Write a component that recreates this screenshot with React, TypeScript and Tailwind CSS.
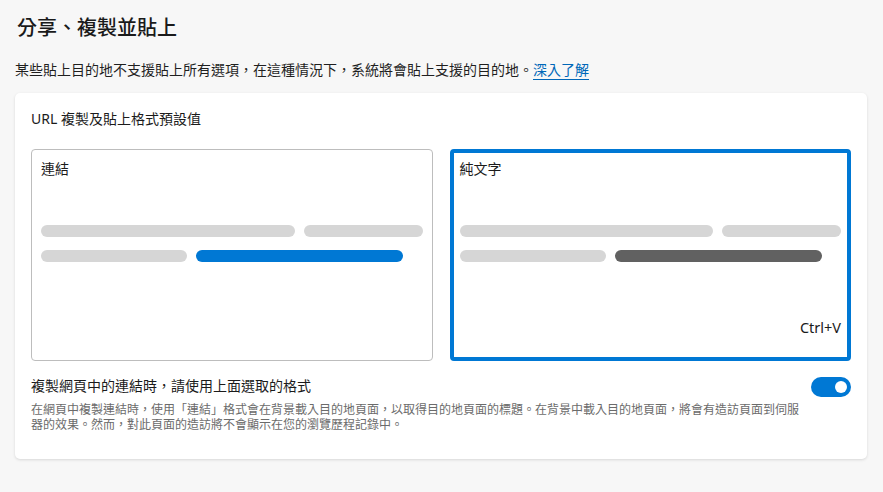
import React from "react";

const font = {
  fontFamily:
    '"Noto Sans", "Noto Sans CJK TC", "Liberation Sans", sans-serif',
};

export default function App() {
  return (
    <div
      className="min-h-[492px] w-full bg-[#f7f7f7] pl-[15px] pr-[16px] pt-[14px] text-[#1b1b1b]"
      style={font}
    >
      <h1 className="pl-[2px] text-[20px] font-medium leading-[28px] text-[#1a1a1a]">
        分享、複製並貼上
      </h1>
      <p className="mt-[18px] text-[14px] leading-[20px] text-[#1f1f1f]">
        某些貼上目的地不支援貼上所有選項，在這種情況下，系統將會貼上支援的目的地。
        <a className="text-[#0067b8] underline decoration-[#0067b8] underline-offset-[4px]">
          深入了解
        </a>
      </p>

      <div className="mt-[13px] rounded-[5px] bg-white px-4 pb-[27px] pt-4 shadow-[0_1px_3px_rgba(0,0,0,0.13)]">
        <div className="text-[14px] leading-[20px] text-[#1b1b1b]">
          URL 複製及貼上格式預設值
        </div>

        <div className="mt-5 grid grid-cols-2 gap-[17px]">
          <div className="flex h-[212px] flex-col rounded-[4px] border border-[#bdbdbd] p-[9px]">
            <div className="text-[14px] leading-[20px] text-[#1b1b1b]">連結</div>
            <div className="mt-[46px] flex gap-[9px]">
              <div className="h-[12px] w-[254px] rounded-full bg-[#d6d6d6]" />
              <div className="h-[12px] w-[119px] rounded-full bg-[#d6d6d6]" />
            </div>
            <div className="mt-[13px] flex gap-[9px]">
              <div className="h-[12px] w-[146px] rounded-full bg-[#d6d6d6]" />
              <div className="h-[12px] w-[207px] rounded-full bg-[#0078d4]" />
            </div>
          </div>

          <div className="flex h-[212px] flex-col rounded-[4px] border-4 border-[#0078d4] p-[6px]">
            <div className="text-[14px] leading-[20px] text-[#1b1b1b]">純文字</div>
            <div className="mt-[46px] flex gap-[9px]">
              <div className="h-[12px] w-[254px] rounded-full bg-[#d6d6d6]" />
              <div className="h-[12px] w-[119px] rounded-full bg-[#d6d6d6]" />
            </div>
            <div className="mt-[13px] flex gap-[9px]">
              <div className="h-[12px] w-[146px] rounded-full bg-[#d6d6d6]" />
              <div className="h-[12px] w-[207px] rounded-full bg-[#616161]" />
            </div>
            <div className="mb-[14px] mt-auto text-right text-[14.5px] leading-[20px] text-[#1b1b1b]">
              Ctrl+V
            </div>
          </div>
        </div>

        <div className="mt-[15px] flex items-start justify-between">
          <div className="w-[775px]">
            <div className="text-[14px] leading-[20px] text-[#1b1b1b]">
              複製網頁中的連結時，請使用上面選取的格式
            </div>
            <div className="mt-[6px] text-[12px] leading-[15px] text-[#6b6b6b]">
              在網頁中複製連結時，使用「連結」格式會在背景載入目的地頁面，以取得目的地頁面的標題。在背景中載入目的地頁面，將會有造訪頁面到伺服器的效果。然而，對此頁面的造訪將不會顯示在您的瀏覽歷程記錄中。
            </div>
          </div>
          <div className="mt-px flex h-5 w-10 items-center justify-end rounded-full bg-[#0078d4] pr-[4px]">
            <div className="h-[12px] w-[12px] rounded-full bg-white" />
          </div>
        </div>
      </div>
    </div>
  );
}
